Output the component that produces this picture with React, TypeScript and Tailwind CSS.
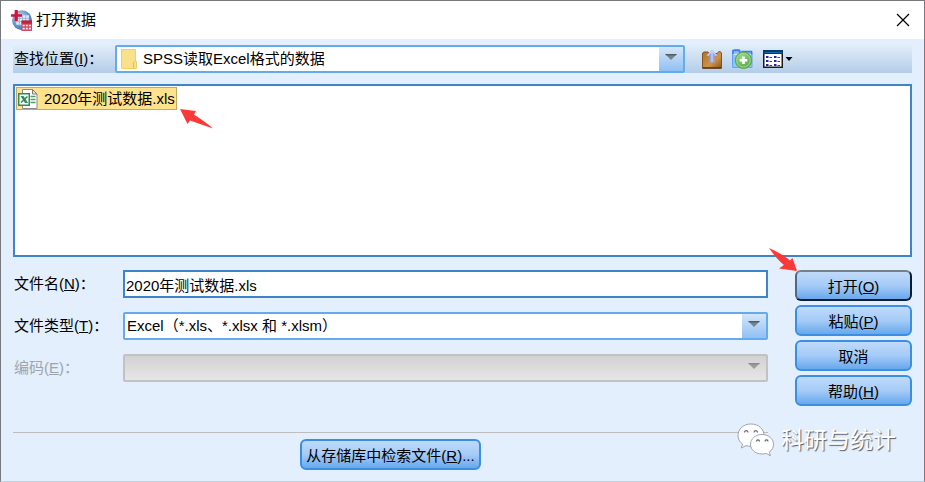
import type { ReactNode } from "react";
import { clsx } from "clsx";

const FILES = ["2020年测试数据.xls"];

const AppIcon = () => (
  <svg width="21" height="21" viewBox="0 0 20 20" aria-hidden="true">
    <defs>
      <radialGradient id="globe" cx="0.4" cy="0.35" r="0.7">
        <stop offset="0" stopColor="#c3dcf0" />
        <stop offset="1" stopColor="#2f6dab" />
      </radialGradient>
    </defs>
    <circle cx="10.5" cy="9.8" r="9.5" fill="url(#globe)" />
    <rect x="5" y="5" width="12" height="9" fill="#eaf2fa" opacity="0.9" />
    <path d="M5 8h12M5 11h12M8 5v9M11 5v9M14 5v9" stroke="#8db2d6" strokeWidth="0.8" />
    <rect x="10" y="10" width="10" height="10" fill="#cf4a64" />
    <rect x="10" y="10" width="10" height="3" fill="#b92344" />
    <path d="M11 14h2v1.500h-2zM14 14h2v1.500h-2zM17 14h2v1.500h-2zM11 17h2v1.500h-2zM14 17h2v1.500h-2zM17 17h2v1.500h-2z" fill="#fbe6ea" />
    <path d="M3.500 0h3v4h4v2.500h-4v4h-3v-4H0V4h3.500z" fill="#d3123c" />
  </svg>
);

const FolderIcon = () => (
  <svg width="16" height="20" viewBox="0 0 16 20" aria-hidden="true">
    <path d="M0.500 0.500h14v11l1 1v7h-15z" fill="#fbe08b" stroke="#f1cf67" />
    <path d="M12.500 19.500v-6l2-2" fill="none" stroke="#e8bd45" />
  </svg>
);

const ExcelIcon = () => (
  <svg width="20" height="20" viewBox="0 0 20 20" aria-hidden="true">
    <path d="M4.500 0.500h10l4.500 4.500v14.500H4.500z" fill="#fff" stroke="#8b8b8b" />
    <path d="M14.500 0.500v4.500H19z" fill="#e2e2e2" stroke="#7c7c7c" />
    <path d="M12.500 7.500h5M12.500 10.500h5M12.500 13.500h5" stroke="#4f9a6e" strokeWidth="1.500" />
    <rect x="0.750" y="4.750" width="10.500" height="11.500" fill="#fff" stroke="#2f8a56" strokeWidth="1.500" />
    <path d="M2.500 7h3l4.500 7H7z" fill="#2f8a56" />
    <path d="M9.500 7.500L3 13.500" stroke="#2f8a56" strokeWidth="1.600" />
  </svg>
);

const UpFolderIcon = () => (
  <svg width="20" height="20" viewBox="0 0 20 20" aria-hidden="true">
    <defs>
      <linearGradient id="crate" x1="0" y1="0" x2="1" y2="1">
        <stop offset="0" stopColor="#a8702c" />
        <stop offset="0.6" stopColor="#cf9346" />
        <stop offset="1" stopColor="#8a551b" />
      </linearGradient>
    </defs>
    <path d="M0.500 4l1.500-1h4l1 1.500h8l2.500-2.500 2 2v15h-19z" fill="url(#crate)" stroke="#835226" />
    <path d="M0.500 19h19" stroke="#5b3510" strokeWidth="1.500" />
    <path d="M10 1L4 7h3.500v6.500h5V7H16z" fill="#8ea6f2" />
    <path d="M10 2v11M5.500 6.500L10 2l4.500 4.500" fill="none" stroke="#c6d3ff" strokeWidth="1.200" />
  </svg>
);

const NewFolderIcon = () => (
  <svg width="21" height="20" viewBox="0 0 21 20" aria-hidden="true">
    <defs>
      <radialGradient id="plus" cx="0.4" cy="0.3" r="0.8">
        <stop offset="0" stopColor="#9bd585" />
        <stop offset="1" stopColor="#4aa545" />
      </radialGradient>
    </defs>
    <path d="M0.500 2l2-1.500h5L9 3h11v15.500H0.500z" fill="#8fc4fb" stroke="#62a4f3" />
    <path d="M1 5V1.500h6l1 3M9.500 2.500h10v3" fill="none" stroke="#3f7cf2" strokeWidth="1.500" />
    <path d="M2 5.500h17" stroke="#cfe6ff" />
    <circle cx="11.500" cy="11.300" r="8.200" fill="url(#plus)" stroke="#5ca354" />
    <circle cx="11.500" cy="11.300" r="6.800" fill="none" stroke="#b5e39e" strokeWidth="0.800" />
    <path d="M10.200 7.500h2.600V10h2.500v2.600h-2.500v2.500h-2.600v-2.500H7.700V10h2.500z" fill="#fff" />
  </svg>
);

const ViewIcon = () => (
  <svg width="30" height="18" viewBox="0 0 30 18" aria-hidden="true">
    <rect x="0.750" y="0.750" width="18.500" height="16.500" fill="#fff" stroke="#1c1c1c" strokeWidth="1.500" />
    <path d="M0 2h20" stroke="#063a6b" strokeWidth="4" />
    <path d="M1.500 2.500h17" stroke="#1468a8" />
    <path d="M3 7h2.500M11 7h2.500M3 11h2.500M11 11h2.500M3 15h2.500M11 15h2.500" stroke="#2424a8" strokeWidth="2" />
    <path d="M6.500 7.500h2.500M14.500 7.500H17M6.500 11.500h2.500M14.500 11.500H17M6.500 15.500h2.500M14.500 15.500H17" stroke="#444" />
    <path d="M22.500 7h7L26 11z" fill="#000" />
  </svg>
);

const ArrowMark = ({ className, d }: { className: string; d: string }) => (
  <svg className={clsx("pointer-events-none absolute", className)} viewBox="0 0 34 26" width="34" height="26" aria-hidden="true">
    <path d={d} fill="#fa3a38" />
  </svg>
);

const WeChatIcon = () => (
  <svg width="38" height="34" viewBox="0 0 38 34" aria-hidden="true">
    <g fill="#fff" stroke="#8a9097" strokeWidth="0.800">
      <path d="M14 1C6.500 1 1 6 1 12.500c0 3.500 1.800 6.600 4.600 8.700L4.300 25l4.700-2.400c1.600.5 3.300.7 5 .7 7.500 0 13-4.800 13-10.900C27 6 21.500 1 14 1z" />
      <path d="M25 11.500c-6.500 0-11.500 4.300-11.500 9.800S18.500 31 25 31c1.500 0 2.900-.2 4.200-.6l4.300 2.400-1.300-3.700c2.800-1.800 4.300-4.600 4.300-7.800 0-5.500-5-9.800-11.500-9.800z" />
    </g>
    <g fill="none" stroke="#5b6269" strokeWidth="1.200">
      <path d="M7.500 9.500c0-2.600 3.500-2.600 3.500 0M17 9.500c0-2.600 3.500-2.600 3.500 0" />
      <path d="M19.500 18.500c0-2.300 3-2.300 3 0M28 18.500c0-2.300 3-2.300 3 0" />
    </g>
  </svg>
);

const Caret = ({ disabled = false }: { disabled?: boolean }) => (
  <span className="pointer-events-none absolute inset-y-0 right-1.5 flex items-center pb-1">
    <svg width="12" height="6" viewBox="0 0 12 6" aria-hidden="true">
      <path d="M0 0h12L6 6z" fill={disabled ? "#9c9c9c" : "#7a8288"} />
      <path d="M0 0h12l-1.500 1.500h-9z" fill={disabled ? "#8b8b8b" : "#555d64"} />
    </svg>
  </span>
);

type SelectBoxProps = {
  id: string;
  options: string[];
  disabled?: boolean;
  icon?: ReactNode;
};

const SelectBox = ({ id, options, disabled, icon }: SelectBoxProps) => (
  <div
    className={clsx(
      "relative flex h-7 min-w-0 flex-1 items-center rounded-xs border-2",
      disabled
        ? "border-[#c2c2c2] bg-linear-to-b from-[#d2d2d2] to-[#e6e6e6]"
        : "border-[#64abed] bg-linear-to-b from-[#d4e6fa] to-[#91c0f2]"
    )}
  >
    <div className={clsx("mr-6 flex h-full min-w-0 flex-1 items-center", !disabled && "bg-white")}>
      {icon && <span className="ml-1 flex">{icon}</span>}
      <select
        id={id}
        disabled={disabled}
        className={clsx(
          "-mr-6 h-full min-w-0 flex-1 appearance-none bg-transparent outline-none",
          icon ? "pl-1.5" : "pl-0.5"
        )}
      >
        {options.map((option) => (
          <option key={option}>{option}</option>
        ))}
      </select>
    </div>
    <Caret disabled={disabled} />
  </div>
);

type FieldProps = {
  id: string;
  label: string;
  hotkey: string;
  disabled?: boolean;
  children: ReactNode;
};

const Field = ({ id, label, hotkey, disabled, children }: FieldProps) => (
  <div className="flex items-center">
    <label htmlFor={id} className={clsx("w-[110px] shrink-0 pl-px whitespace-nowrap", disabled && "text-[#a0a4a8]")}>
      {label}(<u>{hotkey}</u>)：
    </label>
    {children}
  </div>
);

type DialogButtonProps = {
  label: string;
  hotkey?: string;
  suffix?: string;
  primary?: boolean;
};

const DialogButton = ({ label, hotkey, suffix, primary }: DialogButtonProps) => (
  <button
    type="button"
    className={clsx(
      "h-[31px] rounded-md border-2 bg-linear-to-b from-[#bfdafa] via-[#a5cbf7] to-[#67a8ec] px-1 pt-0.5 whitespace-nowrap",
      primary ? "border-t-[#77808a] border-r-[#0d1d30] border-b-[#0d1d30] border-l-[#4b6888]" : "border-[#388fe3]"
    )}
  >
    {label}
    {hotkey && (
      <>
        (<u>{hotkey}</u>)
      </>
    )}
    {suffix}
  </button>
);

const App = () => {
  return (
    <div className="relative flex min-h-screen flex-col border border-[#77797c] border-b-[#c3d0de] bg-[#e3effc] font-['Liberation_Sans','Noto_Sans_CJK_SC',sans-serif] text-[15px] leading-5 text-black">
      <header className="flex h-[38px] items-center bg-white pr-3.5 pl-2.5">
        <AppIcon />
        <h1 className="ml-1 flex-1">打开数据</h1>
        <button type="button" aria-label="关闭" className="flex">
          <svg width="14" height="14" viewBox="0 0 14 14" aria-hidden="true">
            <path d="M1 1l12 12M13 1L1 13" stroke="#000" strokeWidth="1.200" />
          </svg>
        </button>
      </header>

      <main className="px-3 pt-1.5 pb-2.5">
        <div className="flex h-7 items-center bg-linear-to-b from-[#e1edfa] to-[#b3cde8]">
          <label htmlFor="look-in" className="w-[102px] shrink-0 pl-px whitespace-nowrap">
            查找位置(<u>I</u>)：
          </label>
          <div className="flex flex-1">
            <SelectBox id="look-in" options={["SPSS读取Excel格式的数据"]} icon={<FolderIcon />} />
          </div>
          <div className="ml-[17px] flex w-[210px] items-center gap-2.5">
            <button type="button" aria-label="上一级">
              <UpFolderIcon />
            </button>
            <button type="button" aria-label="新建文件夹">
              <NewFolderIcon />
            </button>
            <button type="button" aria-label="视图">
              <ViewIcon />
            </button>
          </div>
        </div>

        {/* File list */}
        <ul className="relative mt-[11px] h-[173px] border-2 border-[#3d85c8] bg-white p-px">
          {FILES.map((file) => (
            <li key={file}>
              <button
                type="button"
                className="flex h-[23px] items-center gap-1.5 border border-[#c3a862] bg-[#ffe28c] px-px whitespace-nowrap"
              >
                <ExcelIcon />
                {file}
              </button>
            </li>
          ))}
          <ArrowMark
            className="top-[22px] left-[165px]"
            d="M0 1L16 3L14 6.500C21 11 28 16 33 20.500C25 18 18 15 10 12.500L7.500 16z"
          />
        </ul>

        <div className="mt-[13px] flex gap-[27px]">
          <div className="flex min-w-0 flex-1 flex-col">
            <div className="flex flex-col gap-3.5">
              <Field id="file-name" label="文件名" hotkey="N">
                <input
                  id="file-name"
                  type="text"
                  defaultValue="2020年测试数据.xls"
                  className="h-7 min-w-0 flex-1 border-2 border-[#3d85c8] bg-white px-px outline-none"
                />
              </Field>
              <Field id="file-type" label="文件类型" hotkey="T">
                <SelectBox id="file-type" options={["Excel（*.xls、*.xlsx 和 *.xlsm）"]} />
              </Field>
              <Field id="encoding" label="编码" hotkey="E" disabled>
                <SelectBox id="encoding" options={[""]} disabled />
              </Field>
            </div>
            <hr className="mt-[50px] mb-1.5 border-[#bdbdbd]" />
            <div className="flex justify-center">
              <DialogButton label="从存储库中检索文件" hotkey="R" suffix="..." />
            </div>
          </div>

          <div className="relative flex w-[117px] shrink-0 flex-col gap-1">
            <DialogButton label="打开" hotkey="O" primary />
            <DialogButton label="粘贴" hotkey="P" />
            <DialogButton label="取消" />
            <DialogButton label="帮助" hotkey="H" />
            <ArrowMark
              className="-top-6 -left-7"
              d="M2 2C11 6 18 10 23 14.500L25.500 12L30 25L12 22.500L17 19C11 14 6 8 2 2z"
            />
          </div>
        </div>
      </main>

      {/* Account mark over the lower right corner */}
      <div className="pointer-events-none absolute right-7 bottom-6 flex items-center gap-1.5">
        <WeChatIcon />
        <span className="text-[23px] leading-8 text-white [text-shadow:1px_1px_1px_#555b62]">科研与统计</span>
      </div>
    </div>
  );
};

export default App;
